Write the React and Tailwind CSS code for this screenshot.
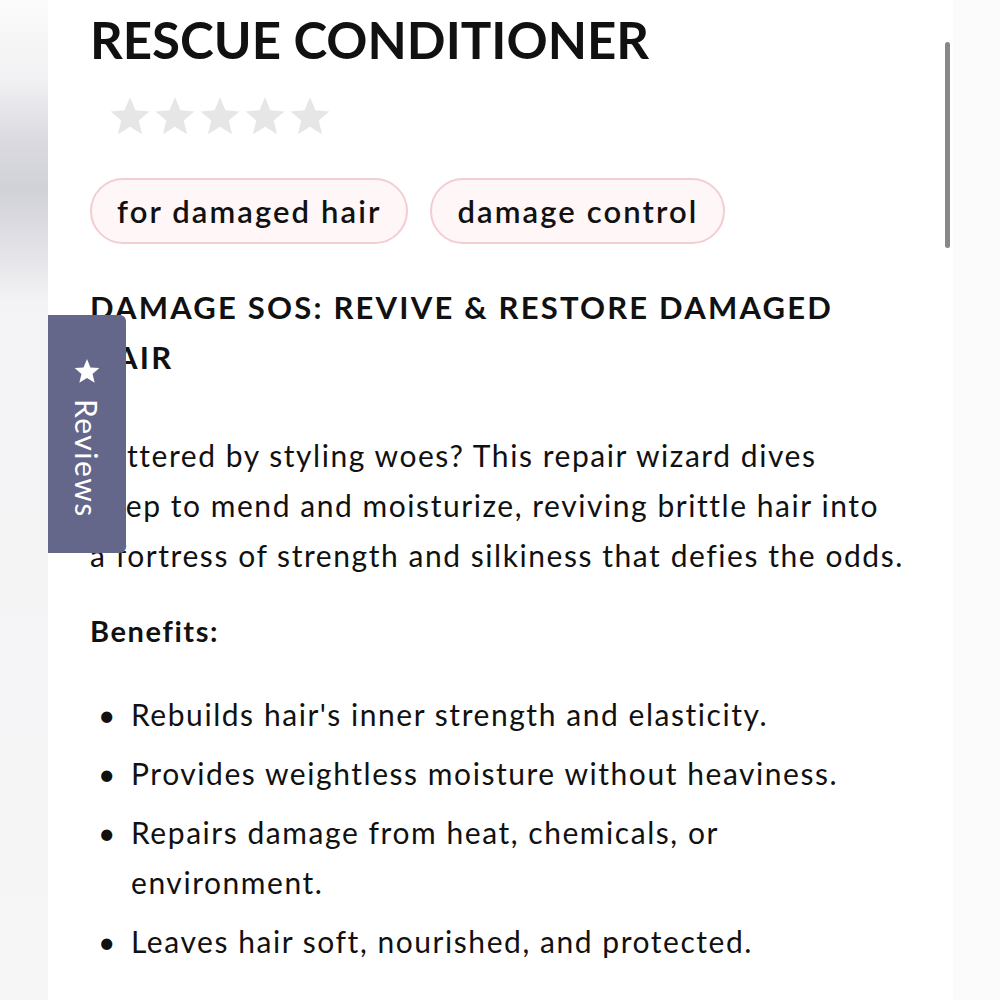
import React from "react";

function Star({ className }) {
  return (
    <svg viewBox="0 0 24 24" className={className} fill="currentColor">
      <path d="M12 1.8l2.95 7.1 7.65.6-5.83 5 1.8 7.5L12 17.9 5.43 22l1.8-7.5-5.83-5 7.65-.6z" />
    </svg>
  );
}

export default function App() {
  const font = { fontFamily: "Lato, 'Open Sans', sans-serif" };
  return (
    <div className="w-[1000px] h-[1000px] overflow-hidden flex bg-white text-[#111]" style={font}>
      <div className="w-[48px] shrink-0 bg-[linear-gradient(to_bottom,#fbfbfb_0%,#f1f1f3_8%,#dadae0_14%,#d1d1d8_19%,#e2e2e7_25%,#f3f3f5_30%,#f7f6f7_100%)]" />
      <div className="relative w-[905px] shrink-0 overflow-hidden bg-white">
        <div className="pl-[42px] pr-[30px] pt-[10px]">
          <h1 className="text-[51px] font-bold leading-[60px]">RESCUE CONDITIONER</h1>
          <div className="flex gap-[1px] ml-[18px] mt-[24px] text-[#e6e6e6]">
            <Star className="w-[44px] h-[44px]" />
            <Star className="w-[44px] h-[44px]" />
            <Star className="w-[44px] h-[44px]" />
            <Star className="w-[44px] h-[44px]" />
            <Star className="w-[44px] h-[44px]" />
          </div>
          <div className="flex gap-[22px] mt-[40px]">
            <span className="h-[66px] px-[25px] flex items-center rounded-full border-2 border-[#f3cdd3] bg-[#fff6f7] text-[31px] font-semibold tracking-[2.1px]">for damaged hair</span>
            <span className="h-[66px] px-[25px] flex items-center rounded-full border-2 border-[#f3cdd3] bg-[#fff6f7] text-[31px] font-semibold tracking-[2.1px]">damage control</span>
          </div>
          <h2 className="mt-[38px] text-[31px] font-bold leading-[50px] tracking-[2.2px] w-[790px]">DAMAGE SOS: REVIVE &amp; RESTORE DAMAGED HAIR</h2>
          <p className="mt-[48px] text-[30px] leading-[50px] tracking-[1.55px] whitespace-nowrap">
            Battered by styling woes? This repair wizard dives<br />
            deep to mend and moisturize, reviving brittle hair into<br />
            a fortress of strength and silkiness that defies the odds.
          </p>
          <p className="mt-[26px] text-[29px] font-bold leading-[50px] tracking-[1.6px]">Benefits:</p>
          <ul className="mt-[33px] flex flex-col gap-[9px] text-[30px] leading-[50px] tracking-[1.55px]">
            {[
              "Rebuilds hair's inner strength and elasticity.",
              "Provides weightless moisture without heaviness.",
              "Repairs damage from heat, chemicals, or environment.",
              "Leaves hair soft, nourished, and protected.",
            ].map((t) => (
              <li key={t} className="flex">
                <span className="w-[41px] shrink-0 pl-[8px]">•</span>
                <span className="w-[720px]">{t}</span>
              </li>
            ))}
          </ul>
        </div>
        <div className="absolute left-0 top-[315px] w-[78px] h-[238px] bg-[#64668a] rounded-r-[6px] flex flex-col items-center pt-[42px] text-white">
          <Star className="w-[28px] h-[28px]" />
          <span className="mt-[14px] text-[30px] leading-none tracking-[1.5px] [writing-mode:vertical-rl]">Reviews</span>
        </div>
        <div className="absolute right-[3px] top-[42px] w-[5px] h-[206px] rounded-full bg-[#888]" />
      </div>
      <div className="flex-1 bg-[#fbfbfb]" />
    </div>
  );
}
